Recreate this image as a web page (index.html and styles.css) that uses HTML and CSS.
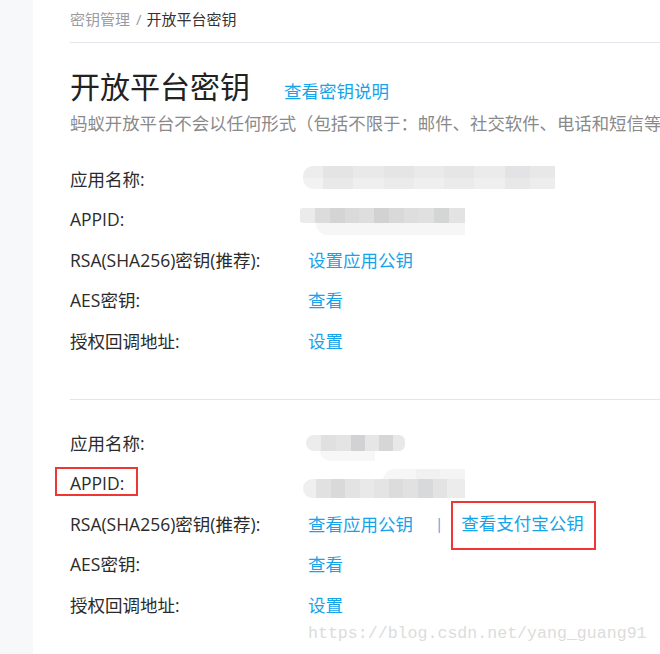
FILE: index.html
```html
<!DOCTYPE html>
<html lang="zh-CN">
<head>
<meta charset="utf-8">
<title>开放平台密钥</title>
<link rel="stylesheet" href="styles.css">
</head>
<body>
<div class="layout">
  <aside class="sidebar"></aside>
  <main class="main">
    <div class="breadcrumb"><span class="crumb-muted">密钥管理</span><span class="crumb-sep">/</span><span class="crumb-current">开放平台密钥</span></div>
    <div class="header">
      <h1 class="title">开放平台密钥</h1>
      <a class="link header-link">查看密钥说明</a>
    </div>
    <p class="subtitle">蚂蚁开放平台不会以任何形式（包括不限于：邮件、社交软件、电话和短信等</p>

    <section class="section first">
      <div class="row"><div class="label">应用名称:</div><div class="value"><div class="blur blur-name1"><i class="blur-top"></i><i class="blur-bottom"></i></div></div></div>
      <div class="row"><div class="label">APPID:</div><div class="value"><div class="blur blur-id1"><i class="blur-top"></i><i class="blur-bottom"></i></div></div></div>
      <div class="row"><div class="label">RSA(SHA256)密钥(推荐):</div><div class="value"><a class="link">设置应用公钥</a></div></div>
      <div class="row"><div class="label">AES密钥:</div><div class="value"><a class="link">查看</a></div></div>
      <div class="row"><div class="label">授权回调地址:</div><div class="value"><a class="link">设置</a></div></div>
    </section>

    <section class="section second">
      <div class="row"><div class="label">应用名称:</div><div class="value"><div class="blur blur-name2"><i class="blur-top"></i><i class="blur-bottom"></i></div></div></div>
      <div class="row"><div class="label"><span class="annot annot-appid">APPID:</span></div><div class="value"><div class="blur blur-id2"><i class="blur-top"></i><i class="blur-bottom"></i></div></div></div>
      <div class="row"><div class="label">RSA(SHA256)密钥(推荐):</div><div class="value"><a class="link">查看应用公钥</a><span class="sep">|</span><a class="link annot annot-key">查看支付宝公钥</a></div></div>
      <div class="row"><div class="label">AES密钥:</div><div class="value"><a class="link">查看</a></div></div>
      <div class="row"><div class="label">授权回调地址:</div><div class="value"><a class="link">设置</a></div></div>
    </section>
  </main>
</div>
<div class="watermark">https://blog.csdn.net/yang_guang91</div>
</body>
</html>
```

FILE: styles.css
```css
html, body {
  margin: 0;
  padding: 0;
  background: #ffffff;
}

body {
  font-family: "Open Sans", "Noto Sans CJK SC", sans-serif;
  color: #333333;
  width: 660px;
  height: 654px;
  overflow: hidden;
  position: relative;
}

.layout {
  display: flex;
  height: 654px;
}

.sidebar {
  width: 33px;
  flex: none;
  background: #f7f8fa;
}

.main {
  flex: 1;
  padding-left: 37px;
  overflow: hidden;
  min-width: 0;
}

.breadcrumb {
  height: 38px;
  line-height: 38px;
  padding-bottom: 4px;
  border-bottom: 1px solid #e6e7ec;
  font-size: 15px;
  white-space: nowrap;
}

.crumb-muted { color: #9a9ba4; }
.crumb-sep { color: #9a9ba4; margin: 0 5px 0 6px; }
.crumb-current { color: #333333; }

.header {
  display: flex;
  align-items: baseline;
  margin-top: 24px;
  height: 40px;
}

.title {
  margin: 0;
  font-size: 30px;
  font-weight: 400;
  line-height: 40px;
  color: #222222;
  white-space: nowrap;
}

.link {
  color: #16a3ea;
  text-decoration: none;
  font-size: 17.5px;
  white-space: nowrap;
}

.header-link {
  margin-left: 34px;
}

.subtitle {
  margin: 4px 0 0;
  font-family: "Noto Sans CJK SC", sans-serif;
  font-size: 17.4px;
  line-height: 24px;
  color: #8a8a8a;
  white-space: nowrap;
}

.section.first {
  margin-top: 23px;
  padding-bottom: 38px;
  border-bottom: 1px solid #e5e5e5;
}

.section.second {
  margin-top: 22.5px;
}

.row {
  display: flex;
  align-items: center;
  height: 40.5px;
  font-size: 17.5px;
}

.label {
  width: 238px;
  flex: none;
  color: #2b2b2b;
  white-space: nowrap;
}

.value {
  display: flex;
  align-items: center;
  white-space: nowrap;
}

.sep {
  color: #3aa4e8;
  margin: 0 18px 0 22px;
  font-size: 15px;
}

/* red annotation frames drawn over the screenshot */
.annot {
  position: relative;
  display: inline-block;
  line-height: 17.5px;
}

.annot::after {
  content: "";
  position: absolute;
  border: 2px solid #f03535;
  pointer-events: none;
}

.annot-appid::after {
  left: -15px;
  right: -14px;
  top: -8px;
  bottom: -4px;
}

.annot-key::after {
  left: -10px;
  right: -12px;
  top: -14px;
  bottom: -18px;
}

/* mosaic-blurred values */
.blur {
  position: relative;
  flex: none;
}

.blur i {
  position: absolute;
  display: block;
}

.blur-name1 {
  width: 252px;
  height: 24px;
  margin-left: -5px;
  margin-top: -1px;
}
.blur-name1 .blur-top {
  left: 0; top: 0; right: 0; height: 12px;
  border-radius: 10px 0 0 0;
  background: linear-gradient(90deg, #ededed 0 8%, #e4e4e4 8% 20%, #e9e9e9 20% 32%, #e5e5e5 32% 44%, #eaeaea 44% 56%, #e6e6e6 56% 68%, #ebebeb 68% 80%, #e3e3e5 80% 90%, #e8e8e8 90%);
}
.blur-name1 .blur-bottom {
  left: 0; top: 12px; right: 0; height: 11px;
  border-radius: 0 0 0 10px;
  background: linear-gradient(90deg, #f2f2f2 0 8%, #e9e9e9 8% 20%, #efefef 20% 32%, #ebebeb 32% 44%, #efefef 44% 56%, #ebebeb 56% 68%, #efefef 68% 80%, #e8e8e8 80% 90%, #ededed 90%);
}

.blur-id1 {
  width: 165px;
  height: 28px;
  margin-left: -8px;
  margin-top: 6px;
}
.blur-id1 .blur-top {
  left: 0; top: 0; right: 0; height: 15px;
  border-radius: 3px 0 0 3px;
  background: linear-gradient(90deg, #ebebeb 0 9%, #dcdcdc 9% 18%, #d4d4d4 18% 27%, #dadada 27% 36%, #dedede 36% 45%, #d2d2d2 45% 54%, #d9d9d9 54% 63%, #dedede 63% 72%, #e0e0e0 72% 81%, #d4d6d6 81% 90%, #e3e3e3 90%);
}
.blur-id1 .blur-bottom {
  left: 16px; top: 15px; right: 0; height: 12px;
  border-radius: 0 0 0 12px;
  background: #f6f6f6;
}

.blur-name2 {
  width: 99px;
  height: 26px;
  margin-left: -2px;
  margin-top: 12px;
}
.blur-name2 .blur-top {
  left: 0; top: 0; right: 0; height: 16px;
  border-radius: 8px 6px 6px 8px;
  background: linear-gradient(90deg, #ececec 0 15%, #e0e0e0 15% 30%, #e4e4e4 30% 45%, #d2d2d4 45% 60%, #e6e6e6 60% 74%, #d6d6d6 74% 88%, #e8e8e8 88%);
}
.blur-name2 .blur-bottom {
  left: 14px; top: 16px; width: 55px; height: 10px;
  border-radius: 0 0 0 10px;
  background: #f7f7f7;
}

.blur-id2 {
  width: 162px;
  height: 30px;
  margin-left: -5px;
  margin-top: 2px;
}
.blur-id2 .blur-top {
  left: 80px; top: 0; right: 0; height: 12px;
  border-radius: 12px 0 0 0;
  background: linear-gradient(90deg, #f6f6f6 0 40%, #f1f1f1 40% 70%, #f4f4f4 70%);
}
.blur-id2 .blur-bottom {
  left: 0; top: 10px; right: 0; height: 19px;
  border-radius: 10px 0 0 10px;
  background: linear-gradient(90deg, #efefef 0 8%, #e1e1e1 8% 17%, #d9d9d9 17% 26%, #e3e3e3 26% 35%, #e9e9e9 35% 44%, #e4e4e4 44% 53%, #dcdcdc 53% 62%, #e1e1e1 62% 71%, #d8d9db 71% 80%, #e3e3e3 80% 89%, #ececec 89%);
}

.watermark {
  position: absolute;
  left: 308px;
  top: 622px;
  font-family: "Liberation Mono", "DejaVu Sans Mono", monospace;
  font-size: 16.6px;
  line-height: 24px;
  color: #dcdcdc;
  white-space: nowrap;
}
```
